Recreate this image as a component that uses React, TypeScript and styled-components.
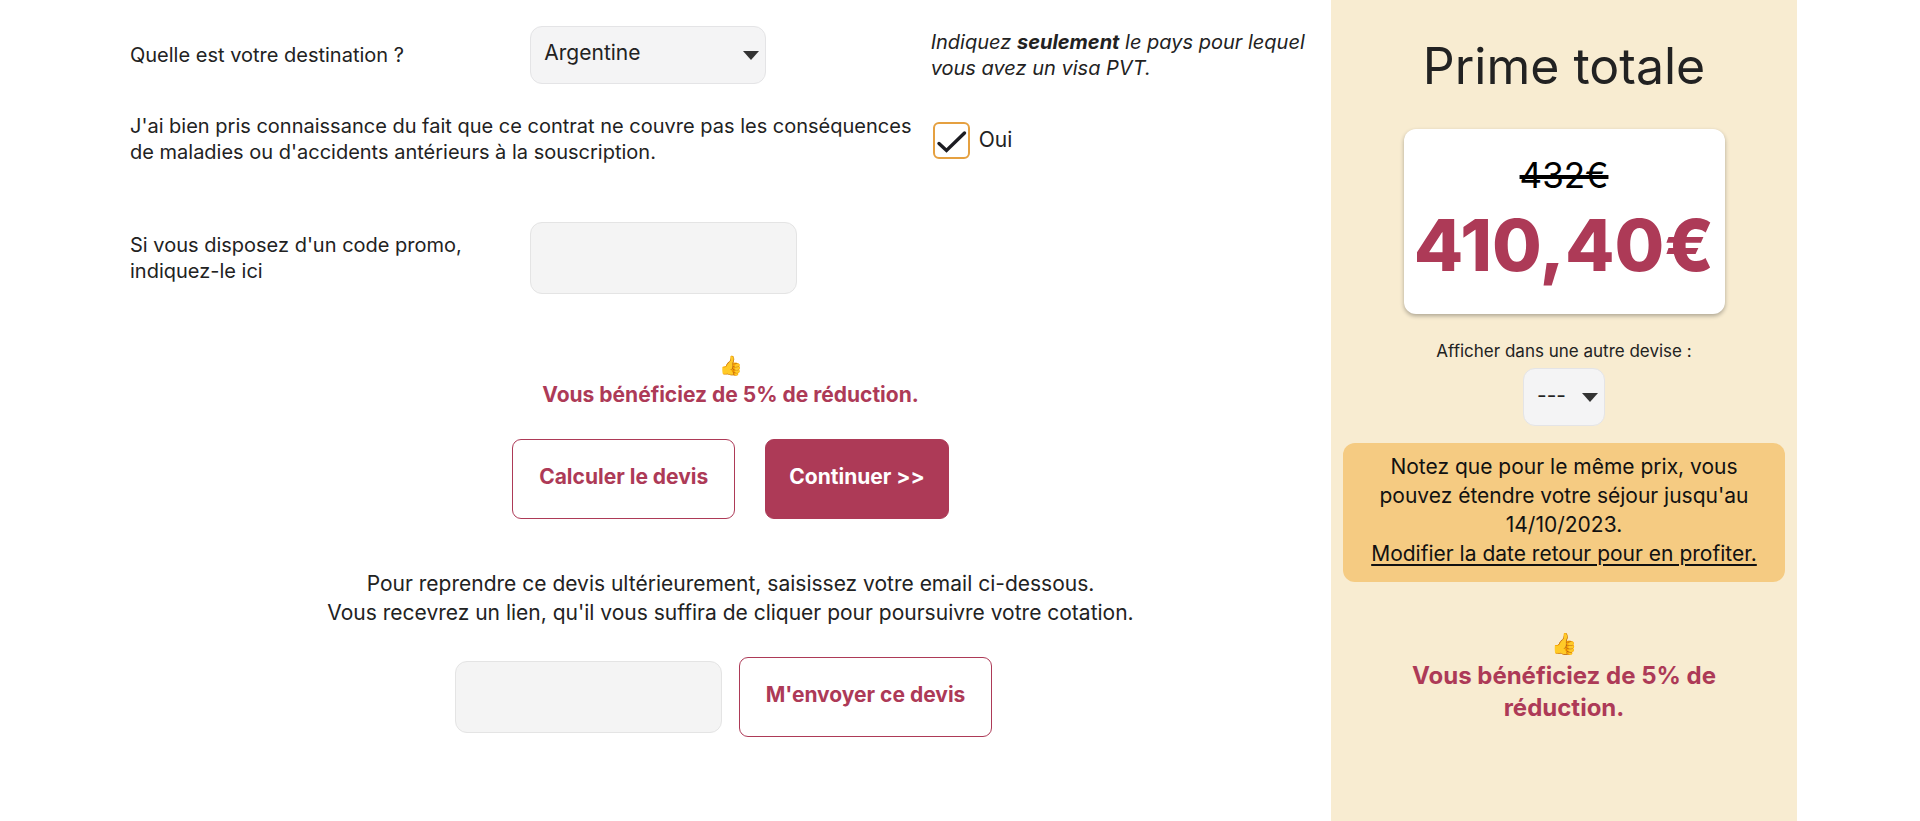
import React from 'react';
import styled, { createGlobalStyle } from 'styled-components';

const GlobalStyle = createGlobalStyle`
  *, *::before, *::after { box-sizing: border-box; }
  body {
    margin: 0;
    background: #fff;
    color: #222;
    font-family: Inter, "Liberation Sans", sans-serif;
  }
`;

const brand = '#ad3a57';

const Page = styled.div`
  display: grid;
  grid-template-columns: minmax(0, 1fr) 466px;
  min-height: 100vh;
  padding: 0 123px;
`;

const Form = styled.form`
  padding: 26px 0 40px 7px;
`;

const Row = styled.div`
  display: grid;
  grid-template-columns: repeat(3, minmax(0, 1fr));
  align-items: center;
  font-size: 20px;
  line-height: 26px;
`;

const AgreementRow = styled(Row)`
  margin: 29px 0 57px;
`;

const Label = styled.label<{ $span?: number }>`
  grid-column: span ${({ $span = 1 }) => $span};
  padding-right: 10px;
`;

const Hint = styled.p`
  margin: 0;
  font-style: italic;
  white-space: nowrap;
`;

const SelectBox = styled.span<{ $width: number }>`
  position: relative;
  display: block;
  width: ${({ $width }) => $width}px;
  max-width: 100%;

  &::after {
    content: '';
    position: absolute;
    top: 25px;
    right: 7px;
    border: 8px solid transparent;
    border-top: 9px solid #333;
    border-bottom: 0;
    pointer-events: none;
  }
`;

const Select = styled.select`
  appearance: none;
  display: block;
  width: 100%;
  height: 58px;
  padding: 0 13px 4px;
  border: 1px solid #e4e4e6;
  border-radius: 12px;
  background: #f4f4f5;
  color: #222;
  font: inherit;
  font-size: 21px;
`;

const TextInput = styled.input`
  width: 267px;
  height: 72px;
  padding: 0 16px;
  border: 1px solid #e4e4e4;
  border-radius: 12px;
  background: #f4f4f4;
  color: #222;
  font: inherit;
  font-size: 21px;
`;

const CheckOption = styled.label`
  display: flex;
  align-items: center;
  gap: 9px;
  padding: 2px 0 0 2px;
  font-size: 21px;
`;

const CheckBox = styled.span`
  display: grid;

  > * {
    grid-area: 1 / 1;
    width: 37px;
    height: 37px;
    margin: 0;
  }

  input {
    appearance: none;
    border: 2px solid #e5a040;
    border-radius: 6px;
    background: #fff;
  }

  svg {
    pointer-events: none;
    visibility: hidden;
  }

  input:checked + svg {
    visibility: visible;
  }
`;

const Discount = styled.p<{ $large?: boolean }>`
  margin: 0;
  color: ${brand};
  font-size: ${({ $large }) => ($large ? 24 : 21)}px;
  font-weight: 700;
  line-height: ${({ $large }) => ($large ? 32 : 29)}px;
  text-align: center;
`;

const Thumb = styled.span`
  display: block;
  font-size: 19px;
`;

const Summary = styled.div`
  padding-top: 57px;
`;

const Actions = styled.div`
  display: flex;
  justify-content: center;
  gap: 30px;
  padding-top: 30px;
`;

const Button = styled.button<{ $primary?: boolean }>`
  height: 80px;
  padding: 0 ${({ $primary }) => ($primary ? 23 : 26)}px 6px;
  border: 1px solid ${brand};
  border-radius: 9px;
  background: ${({ $primary }) => ($primary ? brand : '#fff')};
  color: ${({ $primary }) => ($primary ? '#fff' : brand)};
  font: inherit;
  font-size: 21px;
  font-weight: 700;
  white-space: nowrap;
`;

const ResumeText = styled.label`
  display: block;
  padding-top: 50px;
  font-size: 21px;
  line-height: 29px;
  text-align: center;
`;

const SendRow = styled.div`
  display: flex;
  justify-content: center;
  align-items: center;
  gap: 17px;
  padding: 30px 14px 0 0;
`;

const Aside = styled.aside`
  display: flex;
  flex-direction: column;
  align-items: center;
  padding: 36px 12px 40px;
  background: #f8ecd1;
  text-align: center;
`;

const Title = styled.h2`
  margin: 0 0 33px;
  font-size: 50px;
  font-weight: 400;
  line-height: 60px;
`;

const PriceCard = styled.div`
  width: 321px;
  padding: 24px 0 21px;
  border-radius: 12px;
  background: #fff;
  box-shadow: 0 2px 4px rgba(0, 0, 0, 0.3);
`;

const OldPrice = styled.del`
  display: block;
  color: #000;
  font-size: 35px;
  line-height: 44px;
  text-decoration-thickness: 4px;
`;

const Price = styled.strong`
  display: block;
  color: ${brand};
  font-size: 72px;
  font-weight: 800;
  line-height: 96px;
`;

const CurrencyLabel = styled.label`
  margin: 24px 0 4px;
  font-size: 17px;
  line-height: 26px;
`;

const Note = styled.p`
  align-self: stretch;
  margin: 17px 0 46px;
  padding: 9px 16px 14px;
  border-radius: 12px;
  background: #f5cb82;
  color: #111;
  font-size: 21px;
  line-height: 29px;
`;

const NoteLink = styled.a`
  display: block;
  color: inherit;
  text-decoration-thickness: 2px;
  text-underline-offset: 3px;
`;

const AsideDiscount = styled(Discount)`
  padding: 0 40px;

  ${Thumb} {
    font-size: 21px;
  }
`;

export default function App() {
  return (
    <>
      <GlobalStyle />
      <Page>
        <Form onSubmit={(e) => e.preventDefault()}>
          <Row>
            <Label htmlFor="destination">Quelle est votre destination ?</Label>
            <SelectBox $width={236}>
              <Select id="destination" defaultValue="AR">
                <option value="AR">Argentine</option>
              </Select>
            </SelectBox>
            <Hint>
              Indiquez <strong>seulement</strong> le pays pour lequel
              <br />
              vous avez un visa PVT.
            </Hint>
          </Row>

          <AgreementRow>
            <Label $span={2} htmlFor="agreement">
              J'ai bien pris connaissance du fait que ce contrat ne couvre pas les conséquences
              de maladies ou d'accidents antérieurs à la souscription.
            </Label>
            <CheckOption>
              <CheckBox>
                <input id="agreement" type="checkbox" defaultChecked />
                <svg viewBox="0 0 37 37" fill="none" stroke="#1c1c22" strokeWidth="3.4" strokeLinecap="round" aria-hidden="true">
                  <path d="M6 21.5 L13.5 28.5 L31.5 11" />
                </svg>
              </CheckBox>
              Oui
            </CheckOption>
          </AgreementRow>

          <Row>
            <Label htmlFor="promo">Si vous disposez d'un code promo, indiquez-le ici</Label>
            <TextInput id="promo" type="text" />
          </Row>

          <Summary>
            <Discount>
              <Thumb>👍</Thumb>
              Vous bénéficiez de 5% de réduction.
            </Discount>
          </Summary>

          <Actions>
            <Button type="button">Calculer le devis</Button>
            <Button type="submit" $primary>
              Continuer &gt;&gt;
            </Button>
          </Actions>

          <ResumeText htmlFor="email">
            Pour reprendre ce devis ultérieurement, saisissez votre email ci-dessous.
            <br />
            Vous recevrez un lien, qu'il vous suffira de cliquer pour poursuivre votre cotation.
          </ResumeText>
          <SendRow>
            <TextInput id="email" type="email" />
            <Button type="button">M'envoyer ce devis</Button>
          </SendRow>
        </Form>

        <Aside>
          <Title>Prime totale</Title>
          <PriceCard>
            <OldPrice>432€</OldPrice>
            <Price>410,40€</Price>
          </PriceCard>
          <CurrencyLabel htmlFor="currency">Afficher dans une autre devise :</CurrencyLabel>
          <SelectBox $width={82}>
            <Select id="currency" defaultValue="">
              <option value="">---</option>
            </Select>
          </SelectBox>
          <Note>
            Notez que pour le même prix, vous pouvez étendre votre séjour jusqu'au 14/10/2023.
            <NoteLink href="#date-retour">Modifier la date retour pour en profiter.</NoteLink>
          </Note>
          <AsideDiscount $large>
            <Thumb>👍</Thumb>
            Vous bénéficiez de 5% de réduction.
          </AsideDiscount>
        </Aside>
      </Page>
    </>
  );
}
